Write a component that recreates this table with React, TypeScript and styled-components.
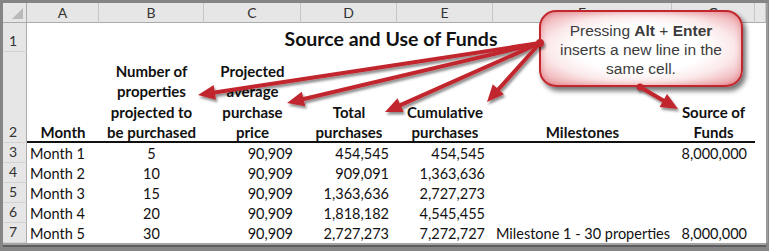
import React from "react";
import styled, { createGlobalStyle } from "styled-components";

const GlobalStyle = createGlobalStyle`
  html, body { margin: 0; padding: 0; background: #858585; }
  * { box-sizing: border-box; }
`;

const Frame = styled.div`
  position: relative;
  width: 769px;
  height: 251px;
  padding: 3px 3px 8px 3px;
  background: #858585;
  overflow: hidden;
`;

const Sheet = styled.div`
  display: grid;
  grid-template-columns: 24px 72px 105px 97px 96px 96px 179px 83px 11px;
  grid-template-rows: 20px 29px 91px repeat(5, 20px);
  width: 763px;
  height: 240px;
  background: #ffffff;
  box-shadow: 0 2px 0 #a3a3a3, 0 4px 0 #5e5e5e, 2px 0 0 #9c9c9c;
  font-family: Lato, "Open Sans", sans-serif;
  font-size: 14.5px;
  color: #111;
`;

const Corner = styled.div`
  position: relative;
  background: #e6e6e6;
  border-right: 1px solid #ababab;
  border-bottom: 1px solid #ababab;
  &::after {
    content: "";
    position: absolute;
    right: 3px;
    bottom: 3px;
    width: 0;
    height: 0;
    border-left: 11px solid transparent;
    border-bottom: 11px solid #b9b9b9;
  }
`;

const ColHead = styled.div`
  background: #e6e6e6;
  border-right: 1px solid #c6c6c6;
  border-bottom: 1px solid #ababab;
  display: flex;
  align-items: center;
  justify-content: center;
  color: #333;
  font-size: 14px;
`;

const RowHead = styled.div`
  background: #e6e6e6;
  border-right: 1px solid #ababab;
  border-bottom: 1px solid #d2d2d2;
  display: flex;
  align-items: flex-end;
  justify-content: center;
  padding: 0 3px 1px 0;
  line-height: 19px;
  color: #333;
  font-size: 14px;
`;

const Title = styled.div`
  grid-column: 2 / 9;
  display: flex;
  align-items: center;
  justify-content: center;
  font-weight: 700;
  font-size: 19.5px;
  color: #111;
  padding-top: 2px;
`;

const HeadCell = styled.div<{ $rule?: boolean }>`
  display: flex;
  flex-direction: column;
  justify-content: flex-end;
  align-items: center;
  text-align: center;
  font-weight: 700;
  font-size: 15px;
  line-height: 20.6px;
  padding-bottom: 0;
  white-space: nowrap;
  box-shadow: ${(p) => (p.$rule ? "inset 0 -2px 0 #111" : "none")};
`;

const Cell = styled.div<{ $align?: "left" | "center" | "right" }>`
  display: flex;
  align-items: center;
  justify-content: ${(p) =>
    p.$align === "right" ? "flex-end" : p.$align === "center" ? "center" : "flex-start"};
  padding: ${(p) => (p.$align === "right" ? "0 8px 0 0" : p.$align === "left" ? "0 0 0 3px" : "0")};
  white-space: nowrap;
  overflow: visible;
`;

const Callout = styled.div`
  position: absolute;
  left: 539px;
  top: 10px;
  width: 204px;
  height: 77px;
  border: 2px solid #c1272d;
  border-radius: 17px;
  background: radial-gradient(ellipse at center, #ffffff 45%, #fbe9ea 66%, #eeb0b4 90%, #e0858c 100%);
  box-shadow: 3px 4px 5px rgba(0, 0, 0, 0.55), inset 0 0 6px rgba(200, 40, 50, 0.35);
  display: flex;
  flex-direction: column;
  align-items: center;
  justify-content: center;
  font-family: "Liberation Sans", Arial, sans-serif;
  font-size: 15.5px;
  line-height: 19px;
  color: #3b3b3b;
  text-align: center;
  padding-top: 1px;
`;

const Overlay = styled.svg`
  position: absolute;
  left: 0;
  top: 0;
  pointer-events: none;
`;

const RED = "#c1272d";

type Pt = [number, number];

function Arrow({ from, to }: { from: Pt; to: Pt }) {
  const dx = to[0] - from[0];
  const dy = to[1] - from[1];
  const len = Math.hypot(dx, dy);
  const ux = dx / len;
  const uy = dy / len;
  const hl = 17;
  const hw = 7.5;
  const bx = to[0] - ux * hl;
  const by = to[1] - uy * hl;
  const px = -uy;
  const py = ux;
  const pts = `${to[0]},${to[1]} ${bx + px * hw},${by + py * hw} ${bx - px * hw},${by - py * hw}`;
  return (
    <g>
      <line x1={from[0]} y1={from[1]} x2={bx + ux * 2} y2={by + uy * 2} stroke={RED} strokeWidth={4} strokeLinecap="round" />
      <polygon points={pts} fill={RED} />
    </g>
  );
}

const cols = ["A", "B", "C", "D", "E", "F", "G", ""];

const rows: [string, string, string, string, string, string, string][] = [
  ["Month 1", "5", "90,909", "454,545", "454,545", "", "8,000,000"],
  ["Month 2", "10", "90,909", "909,091", "1,363,636", "", ""],
  ["Month 3", "15", "90,909", "1,363,636", "2,727,273", "", ""],
  ["Month 4", "20", "90,909", "1,818,182", "4,545,455", "", ""],
  ["Month 5", "30", "90,909", "2,727,273", "7,272,727", "Milestone 1 - 30 properties", "8,000,000"],
];

const headers: string[][] = [
  ["Month"],
  ["Number of", "properties", "projected to", "be purchased"],
  ["Projected", "average", "purchase", "price"],
  ["Total", "purchases"],
  ["Cumulative", "purchases"],
  ["Milestones"],
  ["Source of", "Funds"],
];

const aligns: ("left" | "center" | "right")[] = ["left", "center", "right", "right", "right", "left", "right"];

export default function App() {
  const origin: Pt = [540, 43];
  return (
    <>
      <GlobalStyle />
      <Frame>
        <Sheet>
          <Corner />
          {cols.map((c, i) => (
            <ColHead key={i}>{c}</ColHead>
          ))}

          <RowHead>1</RowHead>
          <Title>Source and Use of Funds</Title>
          <Cell />

          <RowHead>2</RowHead>
          {headers.map((lines, i) => (
            <HeadCell key={i} $rule>
              {lines.map((l, j) => (
                <span key={j}>{l}</span>
              ))}
            </HeadCell>
          ))}
          <HeadCell />

          {rows.map((r, ri) => (
            <React.Fragment key={ri}>
              <RowHead>{ri + 3}</RowHead>
              {r.map((v, ci) => (
                <Cell key={ci} $align={aligns[ci]}>
                  {v}
                </Cell>
              ))}
              <Cell />
            </React.Fragment>
          ))}
        </Sheet>

        <Callout>
          <div>
            Pressing <b>Alt</b> + <b>Enter</b>
          </div>
          <div>inserts a new line in the</div>
          <div>same cell.</div>
        </Callout>

        <Overlay width={769} height={251} viewBox="0 0 769 251">
          <defs>
            <filter id="sh" x="-10%" y="-30%" width="120%" height="160%">
              <feDropShadow dx="1.5" dy="2.5" stdDeviation="1.3" floodColor="#000" floodOpacity="0.45" />
            </filter>
          </defs>
          <g filter="url(#sh)">
            <Arrow from={origin} to={[198, 95]} />
            <Arrow from={origin} to={[287, 103]} />
            <Arrow from={origin} to={[385, 112]} />
            <Arrow from={origin} to={[487, 102]} />
            <Arrow from={[640, 87]} to={[678, 109]} />
            <circle cx={origin[0]} cy={origin[1]} r={4} fill={RED} />
            <circle cx={640} cy={87} r={3.5} fill={RED} />
          </g>
        </Overlay>
      </Frame>
    </>
  );
}
